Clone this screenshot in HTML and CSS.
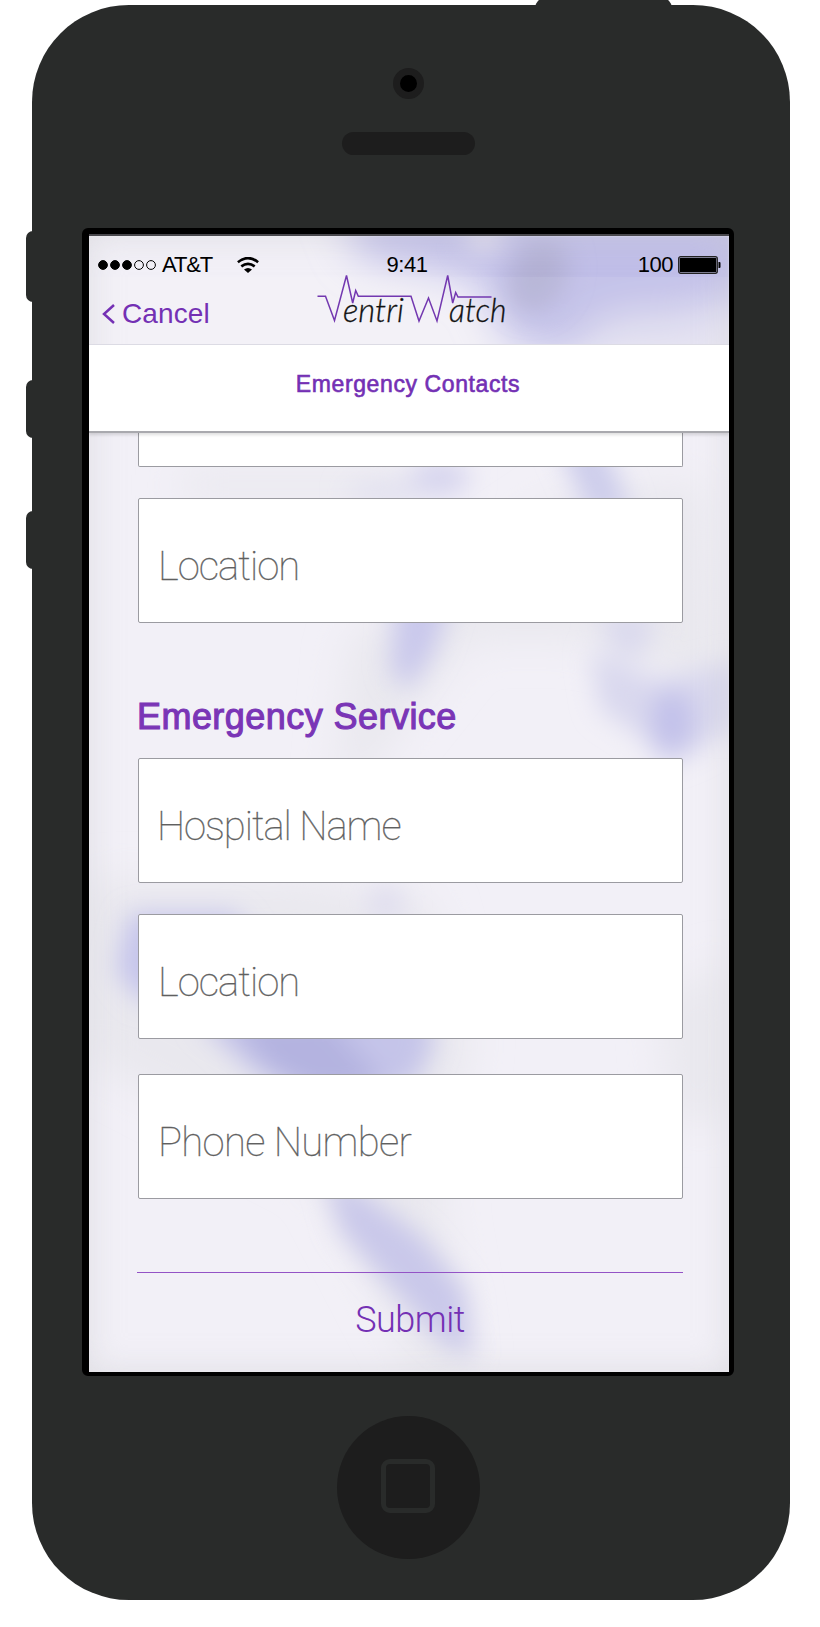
FILE: index.html
```html
<!DOCTYPE html>
<html lang="en">
<head>
<meta charset="utf-8">
<title>VentriWatch – Emergency Contacts</title>
<link rel="stylesheet" href="styles.css">
</head>
<body>
<div class="phone">
  <span class="key key-power"></span>
  <span class="key key-mute"></span>
  <span class="key key-up"></span>
  <span class="key key-down"></span>
  <div class="camera"></div>
  <div class="speaker"></div>
  <main class="screen">
    <svg class="wallpaper" viewBox="89 236 640 1136" aria-hidden="true">
      <defs>
        <filter id="b12" x="-60%" y="-60%" width="220%" height="220%"><feGaussianBlur stdDeviation="13"/></filter>
        <filter id="b20" x="-60%" y="-60%" width="220%" height="220%"><feGaussianBlur stdDeviation="20"/></filter>
      </defs>
      <rect x="89" y="236" width="640" height="1136" fill="#f2f0f7"/>
      <g filter="url(#b20)" fill="#e9e8ee">
        <path d="M180 470H420V500H180ZM560 500L700 480L729 720L650 660L580 640L470 640L390 740L330 850L350 640Z"/>
        <path d="M89 880L300 880L430 900L470 1040L440 1200L470 1372H420L320 1180L89 1060Z"/>
        <path d="M660 1000L729 960V1120H670Z"/>
      </g>
      <g filter="url(#b20)">
        <path d="M335 195H770V300L690 310L600 360L510 345L480 280L420 266L360 256Z" fill="#c0beE8"/>
        <ellipse cx="665" cy="342" rx="85" ry="30" fill="#e2e0f0"/>
      </g>
      <g filter="url(#b12)">
        <ellipse cx="538" cy="275" rx="28" ry="38" fill="#b3b1d4" transform="rotate(25 538 275)"/>
        <ellipse cx="484" cy="238" rx="20" ry="16" fill="#e0ddee"/>
        <ellipse cx="440" cy="478" rx="30" ry="18" fill="#d6d4ee"/>
        <ellipse cx="385" cy="492" rx="40" ry="9" fill="#dfdeef"/>
        <path d="M556 440L604 445L632 515H590Z" fill="#cccceb"/>
        <path d="M397 585H456L434 652L408 690L391 672Z" fill="#c9c8ec"/>
        <path d="M596 612H655L645 655H618Z" fill="#dad9ee"/>
        <path d="M590 650L660 680L740 660V725L694 752L664 764L646 740L600 710Z" fill="#d9d8ee"/>
        <ellipse cx="672" cy="722" rx="22" ry="34" fill="#c2c1ea"/>
        <ellipse cx="386" cy="904" rx="18" ry="18" fill="#dfddef"/>
        <path d="M130 914H235L260 950L170 1000L140 1000L116 970Z" fill="#c5c4ec"/>
        <path d="M195 1018L420 1005L436 1040L415 1085L310 1100L250 1070Z" fill="#c5c4e9"/>
        <path d="M225 1010L330 1020L390 1090L330 1100L270 1070Z" fill="#b4b3e0"/>
        <path d="M322 1165L365 1195L420 1235L465 1290L472 1360L440 1340L386 1282L340 1230Z" fill="#c9c8ea"/>
      </g>
      <path d="M89 277H729V344H89Z" fill="#fff" fill-opacity=".08"/>
    </svg>
    <header class="top">
      <div class="status">
        <div class="carrier">
          <svg class="signal" width="58" height="12" viewBox="0 0 58 12"><g stroke="#000"><circle cx="5" cy="6" r="4.4"/><circle cx="17" cy="6" r="4.4"/><circle cx="29" cy="6" r="4.4"/><circle cx="41" cy="6" r="4.4" fill="none"/><circle cx="53" cy="6" r="4.4" fill="none"/></g></svg>
          <span class="carrier-name">AT&amp;T</span>
          <svg class="wifi" width="22" height="16" viewBox="0 0 22 16"><g fill="none" stroke="#000" stroke-width="2.6"><path d="M.9 5.2Q11-3 21.100 5.200"/><path d="M4.300 9.400Q11 4.200 17.700 9.400"/></g><path d="M7 12.400Q11 9.400 15 12.400L11 16Z"/></svg>
        </div>
        <span class="clock">9:41</span>
        <div class="power">
          <span>100</span>
          <svg width="43" height="18" viewBox="0 0 43 18"><rect x=".7" y=".7" width="38.600" height="16.600" rx="2" fill="#9b9bb4" stroke="#222" stroke-width="1.300"/><rect x="1.900" y="1.900" width="36.200" height="14.200" rx=".5"/><path d="M40.500 6h1q1 0 1 1v4q0 1-1 1h-1Z"/></svg>
        </div>
      </div>
      <div class="nav">
        <a class="back"><svg width="13" height="20" viewBox="0 0 13 20"><path d="M12 1L2 10L12 19" fill="none" stroke="#7430b4" stroke-width="2.500"/></svg><span>Cancel</span></a>
        <svg class="logo" width="196" height="56" viewBox="314 271 196 56">
          <path d="M317.500 296.300H325.500L334.500 320.500L346.500 275.500L352.700 303L355.700 290.500L358.300 296.300H411L419 321L428.500 298L437 321L447.700 275.500L452.700 303L455.700 292.500L458 297H491.500" fill="none" stroke="#7338b0" stroke-width="1.500"/>
          <text class="logo-text" x="343" y="322" textLength="61" lengthAdjust="spacingAndGlyphs">entri</text>
          <text class="logo-text" x="449" y="322" textLength="57.500" lengthAdjust="spacingAndGlyphs">atch</text>
        </svg>
      </div>
    </header>
    <h1 class="title"><span>Emergency Contacts</span></h1>
    <form class="form">
      <div class="field field-cut"></div>
      <div class="field"><span class="t-loc">Location</span></div>
      <h2 class="section"><span>Emergency Service</span></h2>
      <div class="field"><span class="t-hosp">Hospital Name</span></div>
      <div class="field gap-a"><span class="t-loc">Location</span></div>
      <div class="field gap-b"><span class="t-phone">Phone Number</span></div>
      <div class="submit"><span>Submit</span></div>
    </form>
  </main>
  <div class="home"><div class="home-mark"></div></div>
</div>
</body>
</html>
```
FILE: styles.css
```css
* { box-sizing: border-box; }
body { margin: 0; background: #fff; height: 1627px; overflow: hidden; font-family: "Liberation Sans", Arial, sans-serif; }

/* Device shell */
.phone { position: relative; width: 758px; height: 1595px; margin: 5px 0 0 32px; background: #292b2a; border-radius: 97px; display: flex; flex-direction: column; }
.key { position: absolute; left: -6px; width: 20px; background: #292b2a; border-radius: 7px 0 0 7px; z-index: -1; }
.key-mute { top: 226px; height: 71px; }
.key-up { top: 375px; height: 58px; }
.key-down { top: 506px; height: 58px; }
.key-power { left: 503px; top: -7px; width: 137px; height: 20px; border-radius: 12px; }
.camera { width: 31px; height: 31px; margin: 63px 0 0 361px; border: 7px solid #1d1d1d; border-radius: 50%; background: #000; }
.speaker { width: 133px; height: 23px; margin: 33px 0 0 310px; border-radius: 12px; background: #1d1d1d; }
.home { width: 143px; height: 143px; margin: 40px 0 0 305px; border-radius: 50%; background: #1d1d1d; display: flex; align-items: center; justify-content: center; }
.home-mark { width: 54px; height: 54px; margin-left: -1px; margin-top: -3px; border: 5px solid #292b2a; border-radius: 9px; }

/* Screen */
.screen { position: relative; width: 652px; height: 1148px; margin: 73px 0 0 50px; border: solid #000; border-width: 8px 5px 4px 7px; border-radius: 6px; display: flex; flex-direction: column; isolation: isolate; }
.wallpaper { position: absolute; inset: 0; width: 640px; height: 1136px; z-index: -1; }
.screen::after { content: ""; position: absolute; inset: 0; box-shadow: inset 0 0 32px rgba(205, 205, 210, .5), inset 0 0 2px rgba(255, 255, 255, .8), 0 -2px 0 #48474c; z-index: -1; }
.top { height: 109px; border-bottom: 1px solid #dddce5; }
.status { height: 42px; padding: 16px 8px 1px 9px; display: grid; grid-template-columns: 1fr auto 1fr; align-items: center; font-size: 22px; line-height: 24px; color: #000; }
.carrier { display: flex; align-items: center; }
.carrier-name { width: 52px; margin-left: 6px; letter-spacing: -1.1px; white-space: nowrap; }
.wifi { margin-left: 23px; }
.clock { letter-spacing: -.5px; margin: 0 4px 0 -1px; }
.power { display: flex; justify-content: flex-end; align-items: center; gap: 5px; letter-spacing: -.5px; }
.nav { height: 66px; padding-left: 13px; display: flex; }
.back { display: flex; align-items: center; gap: 7px; width: 212px; height: 32px; margin-top: 20px; color: #7430b4; font-size: 28px; letter-spacing: .1px; }
.logo { margin-top: -7px; overflow: visible; }
.logo-text { font: italic 300 34px Lato, sans-serif; fill: #111; stroke: #111; stroke-width: .3px; }
.title { height: 88px; margin: 0; padding-top: 24px; border-bottom: 2px solid #a9a9ae; background: #fff; box-shadow: 0 2px 3px rgba(0, 0, 0, .13); text-align: center; font-size: 23px; line-height: 30px; font-weight: 400; color: #7430b4; -webkit-text-stroke: .6px #7430b4; z-index: 1; }
.title span { margin-right: 2px; letter-spacing: .6px; }

/* Form */
.form { margin: 0 46px 0 49px; display: flex; flex-direction: column; }
.field { height: 125px; padding: 43px 0 0 20px; border: 1px solid #9b9ba1; border-radius: 2px; background: #fff; font: 100 40px/50px Roboto, sans-serif; color: #606060; white-space: nowrap; -webkit-text-stroke: .3px #606060; }
.field-cut { height: 34px; margin-bottom: 31px; border-top: 0; border-radius: 0 0 2px 2px; padding: 0; }
.gap-a { margin-top: 31px; }
.gap-b { margin-top: 35px; }
.t-loc { margin-left: -1px; letter-spacing: -.95px; }
.t-hosp { margin-left: -2px; letter-spacing: -1.05px; }
.t-phone { margin-left: -1px; letter-spacing: -.65px; }
.section { height: 40px; margin: 74px 0 21px -1px; font-size: 36px; line-height: 40px; font-weight: 400; color: #7a35b6; -webkit-text-stroke: 1.1px #7a35b6; white-space: nowrap; letter-spacing: .45px; }
.submit { margin: 73px 0 0 -1px; padding-top: 24px; border-top: 1px solid #9453c6; text-align: center; font: 300 36px/46px Roboto, sans-serif; letter-spacing: -.5px; color: #7430b4; }
```
